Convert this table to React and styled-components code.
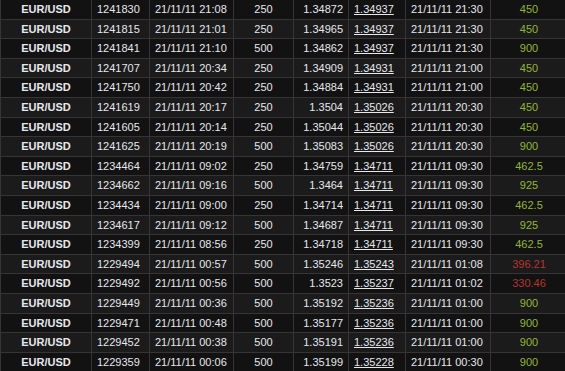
import React from 'react'
import styled, { createGlobalStyle } from 'styled-components'

const Global = createGlobalStyle`
  html, body {
    margin: 0;
    padding: 0;
    background: #111;
    overflow: hidden;
  }
`

const COLS = [91, 58, 84, 60, 55, 57, 85, 77]

const rows = [
  ['1241830', '21/11/11 21:08', '250', '1.34872', '1.34937', '21/11/11 21:30', '450'],
  ['1241815', '21/11/11 21:01', '250', '1.34965', '1.34937', '21/11/11 21:30', '450'],
  ['1241841', '21/11/11 21:10', '500', '1.34862', '1.34937', '21/11/11 21:30', '900'],
  ['1241707', '21/11/11 20:34', '250', '1.34909', '1.34931', '21/11/11 21:00', '450'],
  ['1241750', '21/11/11 20:42', '250', '1.34884', '1.34931', '21/11/11 21:00', '450'],
  ['1241619', '21/11/11 20:17', '250', '1.3504', '1.35026', '21/11/11 20:30', '450'],
  ['1241605', '21/11/11 20:14', '250', '1.35044', '1.35026', '21/11/11 20:30', '450'],
  ['1241625', '21/11/11 20:19', '500', '1.35083', '1.35026', '21/11/11 20:30', '900'],
  ['1234464', '21/11/11 09:02', '250', '1.34759', '1.34711', '21/11/11 09:30', '462.5'],
  ['1234662', '21/11/11 09:16', '500', '1.3464', '1.34711', '21/11/11 09:30', '925'],
  ['1234434', '21/11/11 09:00', '250', '1.34714', '1.34711', '21/11/11 09:30', '462.5'],
  ['1234617', '21/11/11 09:12', '500', '1.34687', '1.34711', '21/11/11 09:30', '925'],
  ['1234399', '21/11/11 08:56', '250', '1.34718', '1.34711', '21/11/11 09:30', '462.5'],
  ['1229494', '21/11/11 00:57', '500', '1.35246', '1.35243', '21/11/11 01:08', '396.21', true],
  ['1229492', '21/11/11 00:56', '500', '1.3523', '1.35237', '21/11/11 01:02', '330.46', true],
  ['1229449', '21/11/11 00:36', '500', '1.35192', '1.35236', '21/11/11 01:00', '900'],
  ['1229471', '21/11/11 00:48', '500', '1.35177', '1.35236', '21/11/11 01:00', '900'],
  ['1229452', '21/11/11 00:38', '500', '1.35191', '1.35236', '21/11/11 01:00', '900'],
  ['1229359', '21/11/11 00:06', '500', '1.35199', '1.35228', '21/11/11 00:30', '900'],
]

const Table = styled.table`
  width: ${COLS.reduce((a, b) => a + b, 0)}px;
  margin-top: -1px;
  border-collapse: collapse;
  table-layout: fixed;
  font-family: "Liberation Sans", Arial, sans-serif;
  font-size: 11px;
  color: #e6e8ec;
`

const Row = styled.tr`
  height: 19.6px;
  background: ${p => (p.odd ? '#1b1b1b' : '#121212')};
`

const Cell = styled.td`
  border: 1px solid #353535;
  padding: 0 5px;
  line-height: 18.6px;
  white-space: nowrap;
  overflow: hidden;
  text-align: ${p => p.align || 'left'};
  font-weight: ${p => (p.bold ? 'bold' : 'normal')};
`

const Rate = styled.span`
  text-decoration: underline;
`

const Payout = styled(Cell)`
  color: ${p => (p.loss ? '#b8342f' : '#93b537')};
`

const App = () => (
  <>
    <Global />
    <Table>
      <colgroup>
        {COLS.map((w, i) => <col key={i} style={{ width: w }} />)}
      </colgroup>
      <tbody>
        {rows.map((r, i) => (
          <Row key={r[0]} odd={i % 2 === 1}>
            <Cell bold align="center">EUR/USD</Cell>
            <Cell>{r[0]}</Cell>
            <Cell>{r[1]}</Cell>
            <Cell align="center">{r[2]}</Cell>
            <Cell align="right">{r[3]}</Cell>
            <Cell><Rate>{r[4]}</Rate></Cell>
            <Cell>{r[5]}</Cell>
            <Payout align="center" loss={r[7]}>{r[6]}</Payout>
          </Row>
        ))}
      </tbody>
    </Table>
  </>
)

export default App
